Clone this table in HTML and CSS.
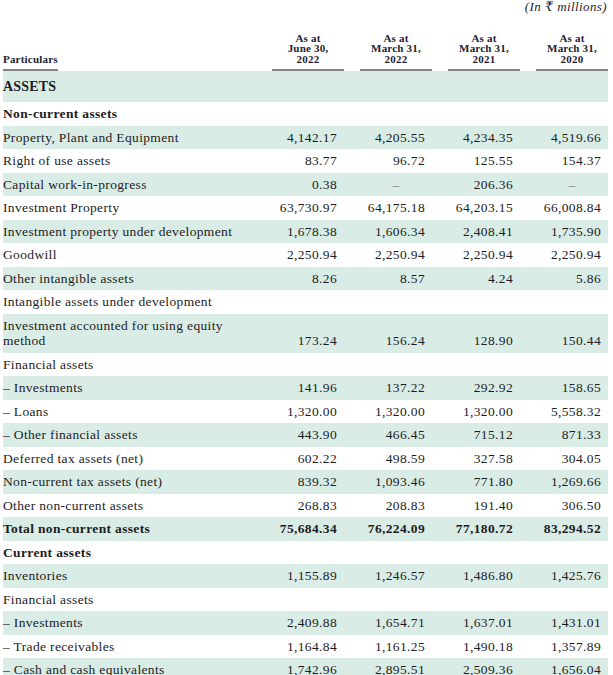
FILE: index.html
```html
<!DOCTYPE html>
<html>
<head>
<meta charset="utf-8">
<link rel="stylesheet" href="styles.css">
</head>
<body>
<div class="page">
  <div class="unit">(In ₹ millions)</div>
  <table class="fin">
    <colgroup>
      <col class="c-label"><col class="c-num"><col class="c-num"><col class="c-num"><col class="c-last">
    </colgroup>
    <thead>
      <tr>
        <th class="part"><span class="h">Particulars</span></th>
        <th><span class="h">As at<br>June 30,<br>2022</span></th>
        <th><span class="h">As at<br>March 31,<br>2022</span></th>
        <th><span class="h">As at<br>March 31,<br>2021</span></th>
        <th class="last"><span class="h">As at<br>March 31,<br>2020</span></th>
      </tr>
    </thead>
    <tbody>
      <tr class="big"><td colspan="5">ASSETS</td></tr>
      <tr class="sub"><td colspan="5">Non-current assets</td></tr>
      <tr><td>Property, Plant and Equipment</td><td class="n">4,142.17</td><td class="n">4,205.55</td><td class="n">4,234.35</td><td class="n">4,519.66</td></tr>
      <tr><td>Right of use assets</td><td class="n">83.77</td><td class="n">96.72</td><td class="n">125.55</td><td class="n">154.37</td></tr>
      <tr><td>Capital work-in-progress</td><td class="n">0.38</td><td class="d">–</td><td class="n">206.36</td><td class="d">–</td></tr>
      <tr><td>Investment Property</td><td class="n">63,730.97</td><td class="n">64,175.18</td><td class="n">64,203.15</td><td class="n">66,008.84</td></tr>
      <tr><td>Investment property under development</td><td class="n">1,678.38</td><td class="n">1,606.34</td><td class="n">2,408.41</td><td class="n">1,735.90</td></tr>
      <tr><td>Goodwill</td><td class="n">2,250.94</td><td class="n">2,250.94</td><td class="n">2,250.94</td><td class="n">2,250.94</td></tr>
      <tr><td>Other intangible assets</td><td class="n">8.26</td><td class="n">8.57</td><td class="n">4.24</td><td class="n">5.86</td></tr>
      <tr><td colspan="5">Intangible assets under development</td></tr>
      <tr><td class="wrap">Investment accounted for using equity method</td><td class="n">173.24</td><td class="n">156.24</td><td class="n">128.90</td><td class="n">150.44</td></tr>
      <tr><td colspan="5">Financial assets</td></tr>
      <tr><td>– Investments</td><td class="n">141.96</td><td class="n">137.22</td><td class="n">292.92</td><td class="n">158.65</td></tr>
      <tr><td>– Loans</td><td class="n">1,320.00</td><td class="n">1,320.00</td><td class="n">1,320.00</td><td class="n">5,558.32</td></tr>
      <tr><td>– Other financial assets</td><td class="n">443.90</td><td class="n">466.45</td><td class="n">715.12</td><td class="n">871.33</td></tr>
      <tr><td>Deferred tax assets (net)</td><td class="n">602.22</td><td class="n">498.59</td><td class="n">327.58</td><td class="n">304.05</td></tr>
      <tr><td>Non-current tax assets (net)</td><td class="n">839.32</td><td class="n">1,093.46</td><td class="n">771.80</td><td class="n">1,269.66</td></tr>
      <tr><td>Other non-current assets</td><td class="n">268.83</td><td class="n">208.83</td><td class="n">191.40</td><td class="n">306.50</td></tr>
      <tr class="total"><td>Total non-current assets</td><td class="n">75,684.34</td><td class="n">76,224.09</td><td class="n">77,180.72</td><td class="n">83,294.52</td></tr>
      <tr class="sub"><td colspan="5">Current assets</td></tr>
      <tr><td>Inventories</td><td class="n">1,155.89</td><td class="n">1,246.57</td><td class="n">1,486.80</td><td class="n">1,425.76</td></tr>
      <tr><td colspan="5">Financial assets</td></tr>
      <tr><td>– Investments</td><td class="n">2,409.88</td><td class="n">1,654.71</td><td class="n">1,637.01</td><td class="n">1,431.01</td></tr>
      <tr><td>– Trade receivables</td><td class="n">1,164.84</td><td class="n">1,161.25</td><td class="n">1,490.18</td><td class="n">1,357.89</td></tr>
      <tr><td>– Cash and cash equivalents</td><td class="n">1,742.96</td><td class="n">2,895.51</td><td class="n">2,509.36</td><td class="n">1,656.04</td></tr>
    </tbody>
  </table>
</div>
</body>
</html>
```

FILE: styles.css
```css
html, body {
  margin: 0;
  padding: 0;
  background: #ffffff;
}
body {
  font-family: "Liberation Serif", "DejaVu Serif", serif;
  color: #1e1c1e;
}
.page {
  padding: 0 5px 0 3px;
}
.unit {
  height: 20px;
  line-height: 14px;
  font-size: 13px;
  font-style: italic;
  letter-spacing: 0.4px;
  text-align: right;
  padding-right: 1px;
  color: #1f2233;
}
.fin {
  border-collapse: collapse;
  table-layout: fixed;
  width: 605px;
}
.c-label { width: 261px; }
.c-num { width: 88px; }
.c-last { width: 80px; }

.fin th {
  height: 51px;
  padding: 0 8px;
  vertical-align: bottom;
  font-size: 11px;
  line-height: 10.8px;
  font-weight: bold;
  letter-spacing: 0.2px;
  color: #1f2233;
}
.fin th.last { padding-right: 0; }
.fin th .h {
  display: block;
  text-align: center;
  padding-bottom: 4px;
  border-bottom: 2px solid #858585;
}
.fin th.part {
  padding: 0;
  text-align: left;
}
.fin th.part .h {
  display: inline-block;
  text-align: left;
}

.fin td {
  padding: 4px 0;
  font-size: 13.5px;
  line-height: 15.5px;
  letter-spacing: 0.35px;
  vertical-align: bottom;
  white-space: nowrap;
}
.fin td.wrap {
  white-space: normal;
  padding-right: 20px;
}
.fin tbody tr:nth-child(odd) {
  background: #d9ece6;
}
.fin td.n {
  text-align: right;
  padding-right: 15px;
}
.fin td.n:last-child {
  padding-right: 7px;
}
.fin td.d {
  text-align: center;
  padding-left: 8px;
  padding-right: 8px;
  color: #7a7a7a;
}
.fin td.d:last-child {
  padding-right: 0;
}
.fin tr.big td {
  padding: 8px 0 7px;
  font-size: 14px;
  font-weight: bold;
  line-height: 16px;
  letter-spacing: 0.2px;
}
.fin tr.sub td,
.fin tr.total td {
  font-weight: bold;
}
```
